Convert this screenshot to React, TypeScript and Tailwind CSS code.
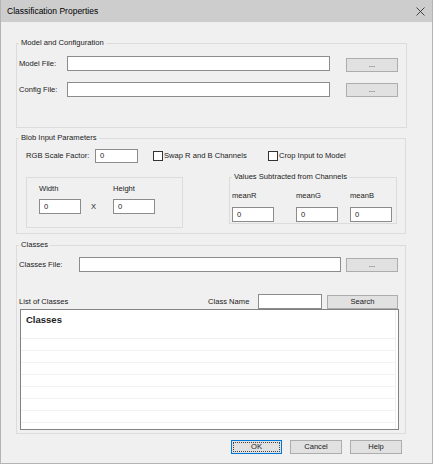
import React from "react";

function TextBox({ className = "", value }: { className?: string; value?: string }) {
  return (
    <div className={`flex items-center bg-white border border-[#8c8c8c] pl-[4px] leading-none ${className}`}>
      {value}
    </div>
  );
}

function Btn({ className = "", children }: { className?: string; children: React.ReactNode }) {
  return (
    <button className={`flex items-center justify-center bg-[#e1e1e1] border border-[#adadad] leading-none ${className}`}>
      {children}
    </button>
  );
}

function Check({ label, className = "" }: { label: string; className?: string }) {
  return (
    <div className={`flex items-center gap-[1px] ${className}`}>
      <span className="w-[10px] h-[10px] bg-white border border-[#333333]" />
      <span>{label}</span>
    </div>
  );
}

export default function App() {
  const rows = [0, 1, 2, 3, 4, 5, 6];
  const means = [
    { name: "meanR", gap: "" },
    { name: "meanG", gap: "ml-[22px]" },
    { name: "meanB", gap: "ml-[12px]" },
  ];
  return (
    <div className="w-[433px] h-[464px] flex flex-col bg-[#f0f0f0] border-x border-b border-[#b4b4b4] font-['Liberation_Sans',Arial,sans-serif] text-[7.6px] text-[#1a1a1a]">
      <div className="h-[22px] shrink-0 flex items-center justify-between bg-[#cdcdcd] pl-[6px] pr-[6px]">
        <span className="text-[8.5px] text-black">Classification Properties</span>
        <svg width="9" height="9" viewBox="0 0 9 9" className="mr-[1px]">
          <path d="M0.5 0.5 L8.5 8.5 M8.5 0.5 L0.5 8.5" stroke="#333" strokeWidth="0.9" fill="none" />
        </svg>
      </div>

      <fieldset className="mt-[16px] ml-[15px] w-[391px] h-[90px] border border-[#dcdcdc] px-[2px] pt-[8px]">
        <legend className="px-[2px] leading-[10px]">Model and Configuration</legend>
        <div className="flex items-start">
          <span className="w-[48px] leading-[15px]">Model File:</span>
          <TextBox className="w-[263px] h-[15px]" />
          <Btn className="ml-[16px] mt-[2px] w-[52px] h-[14px]">...</Btn>
        </div>
        <div className="mt-[10px] flex items-start">
          <span className="w-[48px] leading-[15px]">Config File:</span>
          <TextBox className="w-[263px] h-[15px]" />
          <Btn className="ml-[16px] mt-[1px] w-[52px] h-[14px]">...</Btn>
        </div>
      </fieldset>

      <fieldset className="mt-[5px] ml-[15px] w-[390px] h-[101px] border border-[#dcdcdc] px-[2px] pt-[6px]">
        <legend className="px-[2px] leading-[10px]">Blob Input Parameters</legend>
        <div className="ml-[7px] h-[14px] flex items-center">
          <span className="w-[69px]">RGB Scale Factor:</span>
          <TextBox className="w-[43px] h-[14px]" value="0" />
          <Check className="ml-[15px] w-[115px]" label="Swap R and B Channels" />
          <Check label="Crop Input to Model" />
        </div>
        <div className="ml-[7px] mt-[9px] flex items-start">
          <div className="mt-[5px] w-[157px] h-[51px] border border-[#dcdcdc] pl-[12px] pt-[6px] flex items-start">
            <div className="flex flex-col">
              <span className="leading-[10px]">Width</span>
              <TextBox className="mt-[5px] w-[42px] h-[15px]" value="0" />
            </div>
            <span className="mt-[15px] w-[32px] pl-[10px] leading-[15px]">X</span>
            <div className="flex flex-col">
              <span className="leading-[10px]">Height</span>
              <TextBox className="mt-[5px] w-[42px] h-[15px]" value="0" />
            </div>
          </div>
          <fieldset className="ml-[46px] w-[168px] h-[52px] border border-[#dcdcdc] px-[2px] pt-[9px]">
            <legend className="px-[2px] leading-[10px]">Values Subtracted from Channels</legend>
            <div className="flex">
              {means.map((m) => (
                <div key={m.name} className={`flex flex-col w-[42px] ${m.gap}`}>
                  <span className="leading-[10px]">{m.name}</span>
                  <TextBox className="mt-[6px] w-[42px] h-[15px]" value="0" />
                </div>
              ))}
            </div>
          </fieldset>
        </div>
      </fieldset>

      <fieldset className="mt-[6px] ml-[15px] w-[390px] h-[194px] border border-[#dcdcdc] px-[2px] pt-[7px]">
        <legend className="px-[2px] leading-[10px]">Classes</legend>
        <div className="flex items-start">
          <span className="w-[60px] leading-[15px]">Classes File:</span>
          <TextBox className="w-[262px] h-[15px]" />
          <Btn className="ml-[5px] mt-[1px] w-[52px] h-[14px]">...</Btn>
        </div>
        <div className="mt-[22px] h-[15px] flex items-center">
          <span className="w-[189px]">List of Classes</span>
          <span className="w-[50px]">Class Name</span>
          <TextBox className="w-[64px] h-[15px]" />
          <Btn className="ml-[5px] w-[71px] h-[14px]">Search</Btn>
        </div>
        <div className="ml-[1px] w-[379px] h-[121px] bg-white border border-[#828282]">
          <div className="w-[375px] h-full border-r border-[#efefef]">
            <div className="h-[29px] border-b border-[#efefef] pl-[5px] pt-[4px]">
              <span className="text-[9.5px] font-bold leading-[12px] text-[#222]">Classes</span>
            </div>
            {rows.map((r) => (
              <div key={r} className="h-[12px] border-b border-[#f2f2f2]" />
            ))}
          </div>
        </div>
      </fieldset>

      <div className="mt-[6px] ml-[230px] flex gap-[8px]">
        <button className="w-[51px] h-[14px] bg-[#e1e1e1] border border-[#0078d7] p-[1px] leading-none">
          <span className="flex h-full w-full items-center justify-center border border-dotted border-[#444]">OK</span>
        </button>
        <Btn className="w-[52px] h-[14px]">Cancel</Btn>
        <Btn className="w-[52px] h-[14px]">Help</Btn>
      </div>
    </div>
  );
}
